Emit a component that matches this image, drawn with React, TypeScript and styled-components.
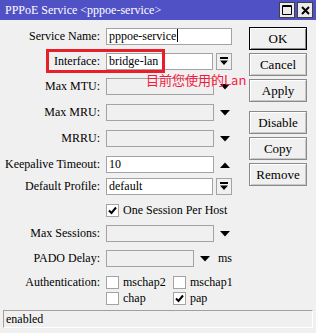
import styled, { createGlobalStyle } from 'styled-components'

const Global = createGlobalStyle`
  html, body { margin: 0; padding: 0; background: #f0f0f0; }
  body { font-family: "Liberation Serif", "Times New Roman", serif; font-size: 12px; color: #000; }
`

const Window = styled.div`
  position: relative;
  width: 316px;
  height: 333px;
  background: #f0f0f0;
  display: flex;
  flex-direction: column;
  overflow: hidden;
  font-family: "Liberation Serif", "Times New Roman", serif;
  font-size: 12px;
`

const TitleBar = styled.div`
  height: 20px;
  background: #5151c6;
  display: flex;
  align-items: center;
  padding: 0 3px 0 5px;
`

const Title = styled.div`
  flex: 1;
  color: #fff;
  font-size: 12px;
  padding-top: 1px;
`

const TitleBtn = styled.div`
  width: 14px;
  height: 14px;
  margin-left: 2px;
  background: #ececec;
  border: 1px solid #404040;
  display: flex;
  align-items: center;
  justify-content: center;
`

const Body = styled.div`
  display: flex;
  flex: 1;
`

const Form = styled.div`
  width: 249px;
  display: flex;
  flex-direction: column;
`

const Row = styled.div<{ $mt: number; $h?: number }>`
  display: flex;
  align-items: center;
  margin-top: ${p => p.$mt}px;
  height: ${p => p.$h ?? 17}px;
`

const Label = styled.div`
  width: 100px;
  text-align: right;
  white-space: nowrap;
  margin-right: 6px;
`

const Field = styled.div<{ $w: number; $on?: boolean }>`
  width: ${p => p.$w}px;
  height: 17px;
  box-sizing: border-box;
  border: 1px solid #a3a3a3;
  background: ${p => (p.$on ? '#fff' : '#f0f0f0')};
  padding-left: 2px;
  line-height: 15px;
  white-space: nowrap;
`

const Caret = styled.span`
  display: inline-block;
  width: 1px;
  height: 13px;
  background: #000;
  vertical-align: -2px;
  margin-left: 1px;
`

const DropBtn = styled.div`
  width: 16px;
  height: 17px;
  box-sizing: border-box;
  margin-left: 3px;
  border: 1px solid #a3a3a3;
  background: #f0f0f0;
  display: flex;
  align-items: center;
  justify-content: center;
`

const Arrow = styled.div<{ $ml?: number }>`
  margin-left: ${p => p.$ml ?? 6}px;
  width: 10px;
  height: 17px;
  display: flex;
  align-items: center;
  justify-content: center;
`

const Unit = styled.span`
  margin-left: 8px;
`

const CheckWrap = styled.div<{ $w?: number }>`
  display: flex;
  align-items: center;
  width: ${p => (p.$w ? `${p.$w}px` : 'auto')};
`

const Box = styled.div`
  width: 13px;
  height: 13px;
  box-sizing: border-box;
  border: 1px solid #a3a3a3;
  background: #fff;
  margin-right: 4px;
  display: flex;
  align-items: center;
  justify-content: center;
`

const Spacer = styled.div`
  width: 106px;
`

const Buttons = styled.div`
  width: 58px;
  padding-top: 7px;
  display: flex;
  flex-direction: column;
`

const Button = styled.div<{ $primary?: boolean; $mt?: number }>`
  height: 23px;
  box-sizing: border-box;
  margin-top: ${p => p.$mt ?? 3}px;
  border: 1px solid ${p => (p.$primary ? '#000' : '#8a8a8a')};
  box-shadow: inset 1px 1px 0 #fff, inset -1px -1px 0 ${p => (p.$primary ? '#8a8a8a' : '#c8c8c8')};
  background: #f0f0f0;
  display: flex;
  align-items: center;
  justify-content: center;
  font-size: 13px;
`

const StatusBar = styled.div`
  margin: 0 3px 5px 3px;
  height: 18px;
  box-sizing: border-box;
  border-top: 1px solid #a0a0a0;
  border-left: 1px solid #a0a0a0;
  border-right: 1px solid #fff;
  border-bottom: 1px solid #fff;
  padding-left: 2px;
  line-height: 16px;
`

const RedBox = styled.div`
  position: absolute;
  left: 46px;
  top: 49px;
  width: 119px;
  height: 24px;
  box-sizing: border-box;
  border: 3px solid #e81e28;
`

const RedNote = styled.div`
  position: absolute;
  left: 146px;
  top: 72px;
  color: #f5193f;
  font-family: "Noto Sans CJK TC", "Noto Sans", sans-serif;
  font-size: 13px;
  line-height: 16px;
  white-space: nowrap;
`

const Down = () => (
  <svg width="10" height="6" viewBox="0 0 10 6"><path d="M0 0H10L5 5.5Z" fill="#000" /></svg>
)
const Up = () => (
  <svg width="10" height="6" viewBox="0 0 10 6"><path d="M0 6H10L5 0.5Z" fill="#000" /></svg>
)
const More = () => (
  <svg width="8" height="9" viewBox="0 0 8 9"><path d="M0 0H8V2H0Z M0 3.5H8L4 8Z" fill="#000" /></svg>
)
const Tick = () => (
  <svg width="9" height="9" viewBox="0 0 9 9"><path d="M1 4.5L3.5 7L8 1.5" stroke="#000" strokeWidth="2" fill="none" /></svg>
)

function Check({ label, on, w }: { label: string; on?: boolean; w?: number }) {
  return (
    <CheckWrap $w={w}>
      <Box>{on && <Tick />}</Box>
      <span>{label}</span>
    </CheckWrap>
  )
}

export default function App() {
  return (
    <Window>
      <Global />
      <TitleBar>
        <Title>PPPoE Service &lt;pppoe-service&gt;</Title>
        <TitleBtn>
          <svg width="10" height="10" viewBox="0 0 10 10"><path d="M0.5 0.5H9.5V9.5H0.5Z M0 1.5H10" stroke="#000" strokeWidth="1" fill="none" /></svg>
        </TitleBtn>
        <TitleBtn>
          <svg width="9" height="9" viewBox="0 0 9 9"><path d="M1 1L8 8M8 1L1 8" stroke="#000" strokeWidth="2" /></svg>
        </TitleBtn>
      </TitleBar>
      <Body>
        <Form>
          <Row $mt={8}>
            <Label>Service Name:</Label>
            <Field $w={126} $on>pppoe-service<Caret /></Field>
          </Row>
          <Row $mt={8}>
            <Label>Interface:</Label>
            <Field $w={107} $on>bridge-lan</Field>
            <DropBtn><More /></DropBtn>
          </Row>
          <Row $mt={8}>
            <Label>Max MTU:</Label>
            <Field $w={108} />
            <Arrow><Down /></Arrow>
          </Row>
          <Row $mt={9}>
            <Label>Max MRU:</Label>
            <Field $w={108} />
            <Arrow><Down /></Arrow>
          </Row>
          <Row $mt={9}>
            <Label>MRRU:</Label>
            <Field $w={108} />
            <Arrow><Down /></Arrow>
          </Row>
          <Row $mt={9}>
            <Label>Keepalive Timeout:</Label>
            <Field $w={108} $on>10</Field>
            <Arrow><Up /></Arrow>
          </Row>
          <Row $mt={5}>
            <Label>Default Profile:</Label>
            <Field $w={107} $on>default</Field>
            <DropBtn><More /></DropBtn>
          </Row>
          <Row $mt={9} $h={13}>
            <Spacer />
            <Check label="One Session Per Host" on />
          </Row>
          <Row $mt={8}>
            <Label>Max Sessions:</Label>
            <Field $w={108} />
            <Arrow><Down /></Arrow>
          </Row>
          <Row $mt={8}>
            <Label>PADO Delay:</Label>
            <Field $w={88} />
            <Arrow><Down /></Arrow>
            <Unit>ms</Unit>
          </Row>
          <Row $mt={9} $h={13}>
            <Label>Authentication:</Label>
            <Check label="mschap2" w={67} />
            <Check label="mschap1" />
          </Row>
          <Row $mt={3} $h={13}>
            <Spacer />
            <Check label="chap" w={67} />
            <Check label="pap" on />
          </Row>
        </Form>
        <Buttons>
          <Button $primary $mt={0}>OK</Button>
          <Button>Cancel</Button>
          <Button>Apply</Button>
          <Button $mt={9}>Disable</Button>
          <Button>Copy</Button>
          <Button>Remove</Button>
        </Buttons>
      </Body>
      <StatusBar>enabled</StatusBar>
      <RedBox />
      <RedNote>目前您使用的Lan</RedNote>
    </Window>
  )
}
